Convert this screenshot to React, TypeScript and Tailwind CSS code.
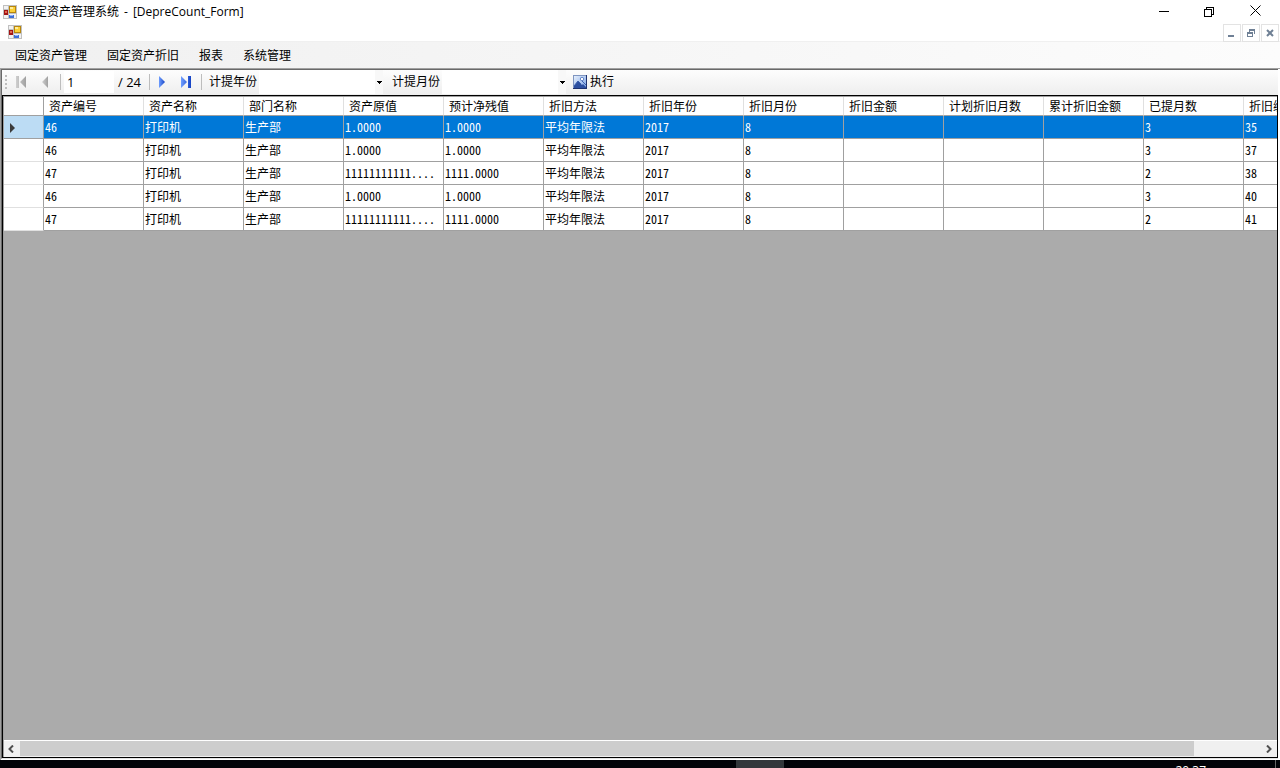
import React from "react";

type Row = string[];

const columns = [
  "资产编号", "资产名称", "部门名称", "资产原值", "预计净残值", "折旧方法", "折旧年份",
  "折旧月份", "折旧金额", "计划折旧月数", "累计折旧金额", "已提月数", "折旧编号",
];

const rows: Row[] = [
  ["46", "打印机", "生产部", "1.0000", "1.0000", "平均年限法", "2017", "8", "", "", "", "3", "35"],
  ["46", "打印机", "生产部", "1.0000", "1.0000", "平均年限法", "2017", "8", "", "", "", "3", "37"],
  ["47", "打印机", "生产部", "11111111111....", "1111.0000", "平均年限法", "2017", "8", "", "", "", "2", "38"],
  ["46", "打印机", "生产部", "1.0000", "1.0000", "平均年限法", "2017", "8", "", "", "", "3", "40"],
  ["47", "打印机", "生产部", "11111111111....", "1111.0000", "平均年限法", "2017", "8", "", "", "", "2", "41"],
];

const menus = ["固定资产管理", "固定资产折旧", "报表", "系统管理"];

function FormIcon() {
  return (
    <svg width="14" height="14" viewBox="0 0 14 14" shapeRendering="crispEdges" aria-hidden="true">
      <path d="M0 0h14v14H0z" fill="#c0c0c0" />
      <path d="M1 1h4v3H1zM1 10h4v3H1zM6 9h7v4H6z" fill="#f2f2f2" />
      <path d="M6 1h7v7H6z" fill="#b8860b" />
      <path d="M7 2h5v5H7z" fill="#fbd038" />
      <path d="M7 2h3v2H7z" fill="#ffec9a" />
      <path d="M1 5h4v5H1z" fill="#a31515" />
      <path d="M2 6h2v2H2z" fill="#e36a50" />
      <path d="M6 10h5v3H6z" fill="#3e6fd8" />
      <path d="M7 10h3v1H7z" fill="#8db4ff" />
    </svg>
  );
}

function NavIcon({ kind }: { kind: "first" | "prev" | "next" | "last" }) {
  const active = kind === "next" || kind === "last";
  const id = `nav-${kind}`;
  return (
    <svg width="12" height="14" viewBox="0 0 12 14" aria-hidden="true">
      <defs>
        <linearGradient id={id}>
          <stop offset="0" stopColor={active ? "#6f9eff" : "#cfcfcf"} />
          <stop offset="1" stopColor={active ? "#1442c4" : "#a0a0a0"} />
        </linearGradient>
      </defs>
      {kind === "first" && <path d="M1 1h3v12H1zM11 1v12L5 7z" fill={`url(#${id})`} />}
      {kind === "prev" && <path d="M9 1v12L3 7z" fill={`url(#${id})`} />}
      {kind === "next" && <path d="M3 1v12l6-6z" fill={`url(#${id})`} />}
      {kind === "last" && <path d="M1 1v12l6-6zM8 1h3v12H8z" fill={`url(#${id})`} />}
    </svg>
  );
}

function NavButton({ kind, label }: { kind: "first" | "prev" | "next" | "last"; label: string }) {
  return (
    <button type="button" aria-label={label} className="flex h-6 w-6 items-center justify-center">
      <NavIcon kind={kind} />
    </button>
  );
}

function Separator() {
  return <span className="ml-[3px] h-4 w-px bg-[#bdbdbd]" />;
}

function DropArrow() {
  return (
    <svg width="5" height="3" viewBox="0 0 5 3" shapeRendering="crispEdges" aria-hidden="true">
      <path d="M0 0h5v1H0zM1 1h3v1H1zM2 2h1v1H2z" fill="#000" />
    </svg>
  );
}

function ComboBox({ label }: { label: string }) {
  return (
    <div className="flex h-6 items-center">
      <label htmlFor={label} className="w-[50px] whitespace-nowrap">{label}</label>
      <div className="relative flex h-6 w-[124px] items-center">
        <select id={label} className="h-6 w-full appearance-none bg-white outline-none">
          <option></option>
        </select>
        <span className="pointer-events-none absolute right-0 flex h-6 w-2 items-center justify-center bg-[#f8f8f8]">
          <DropArrow />
        </span>
      </div>
    </div>
  );
}

function TitleBar() {
  return (
    <header className="flex h-6 shrink-0 items-center justify-between bg-white pl-[3px]">
      <div className="flex items-center gap-[6px]">
        <FormIcon />
        <h1 className="flex gap-[5px]">
          <span>固定资产管理系统</span>
          <span>-</span>
          <span>[DepreCount_Form]</span>
        </h1>
      </div>
      <div className="flex pr-[2px]">
        <button type="button" aria-label="最小化" className="flex h-6 w-[46px] items-center justify-center">
          <svg width="11" height="11" viewBox="0 0 11 11" shapeRendering="crispEdges"><path d="M1 4h10v1H1z" /></svg>
        </button>
        <button type="button" aria-label="还原" className="flex h-6 w-[46px] items-center justify-center">
          <svg width="11" height="11" viewBox="0 0 11 11" fill="none" stroke="#000" shapeRendering="crispEdges">
            <path d="M.5 1.5h7v7h-7zM2.5 1.5v-2h7v7h-2" transform="translate(0 1)" />
          </svg>
        </button>
        <button type="button" aria-label="关闭" className="flex h-6 w-[46px] items-center justify-center pb-1">
          <svg width="11" height="11" viewBox="0 0 11 11" fill="none" stroke="#000"><path d="M.5.5l10 10M10.5.5l-10 10" /></svg>
        </button>
      </div>
    </header>
  );
}

function ChildBar() {
  const box = "flex h-[18px] w-[18px] items-center justify-center border border-[#e3e3e3] bg-white";
  return (
    <div className="flex h-[18px] shrink-0 items-start justify-between border-b border-[#f0f0f0] bg-white pl-2 pr-px">
      <div className="pt-px"><FormIcon /></div>
      <div className="flex gap-px">
        <button type="button" aria-label="最小化子窗口" className={box}>
          <svg width="8" height="8" viewBox="0 0 8 8" shapeRendering="crispEdges"><path d="M0 6h6v2H0z" fill="#6f8095" /></svg>
        </button>
        <button type="button" aria-label="还原子窗口" className={box}>
          <svg width="8" height="8" viewBox="0 0 8 8" shapeRendering="crispEdges" fill="#6f8095">
            <path d="M2 0h6v5H7V2H3v1H2zM0 3h6v5H0zM1 5v2h4V5z" fillRule="evenodd" />
          </svg>
        </button>
        <button type="button" aria-label="关闭子窗口" className={box}>
          <svg width="8" height="8" viewBox="0 0 8 8" fill="none" stroke="#6f8095" strokeWidth="2"><path d="M1 1l6 6M7 1L1 7" /></svg>
        </button>
      </div>
    </div>
  );
}

function ToolBar() {
  return (
    <div className="flex h-[25px] shrink-0 items-start bg-linear-to-b from-[#fdfdfd] to-[#eeeeee] pl-[3px]">
      <div className="flex h-6 items-center">
        <svg width="3" height="14" viewBox="0 0 3 14" shapeRendering="crispEdges" aria-hidden="true">
          <path d="M0 0h2v2H0zM0 4h2v2H0zM0 8h2v2H0zM0 12h2v2H0z" fill="#bdbdbd" />
        </svg>
        <div className="flex items-center pl-px">
          <NavButton kind="first" label="移到第一条记录" />
          <NavButton kind="prev" label="移到上一条记录" />
        </div>
        <Separator />
        <input aria-label="位置" defaultValue="1" className="ml-[3px] h-[22px] w-[50px] bg-white pl-[3px] text-[13px] outline-none" />
        <span className="w-8 pl-1 text-[13px] whitespace-nowrap">/ 24</span>
        <Separator />
        <NavButton kind="next" label="移到下一条记录" />
        <NavButton kind="last" label="移到最后一条记录" />
        <Separator />
        <div className="flex items-center gap-[9px] pl-[7px]">
          <ComboBox label="计提年份" />
          <ComboBox label="计提月份" />
        </div>
        <button type="button" className="ml-[7px] flex h-6 items-center gap-[3px]">
          <svg width="14" height="14" viewBox="0 0 14 14" aria-hidden="true">
            <defs>
              <linearGradient id="picture-sky" x2="1" y2="1">
                <stop offset="0" stopColor="#e4eefc" />
                <stop offset="1" stopColor="#7fa6e6" />
              </linearGradient>
            </defs>
            <path d="M0 0h14v14H0z" fill="#7f95c0" />
            <path d="M13 0h1v14H0v-1h13z" fill="#1d3270" />
            <path d="M1 1h12v12H1z" fill="url(#picture-sky)" />
            <path d="M1 11l4-5 3 3 1 1 1-1 3 3v1H1z" fill="#2c4fa0" />
            <path d="M1 11l4-5 3 3M9 6l4 4" fill="none" stroke="#3b5fae" />
            <circle cx="9" cy="4" r="1.7" fill="#fff" stroke="#4a6fbb" strokeWidth=".8" />
          </svg>
          执行
        </button>
      </div>
    </div>
  );
}

function Grid() {
  return (
    <div className="min-h-0 flex-1 overflow-hidden bg-[#ababab]">
      <table className="w-[1340px] table-fixed border-separate border-spacing-0 font-['Noto_Sans_CJK_SC',sans-serif]">
        <colgroup>
          <col className="w-10" />
          {columns.map((c) => <col key={c} className="w-[100px]" />)}
        </colgroup>
        <thead>
          <tr className="h-[19px] bg-white">
            <th aria-label="行" className="border-r border-b border-[#a0a0a0] p-0" />
            {columns.map((c) => (
              <th key={c} className="border-r border-b border-r-[#e0e0e0] border-b-[#a0a0a0] p-0 pl-[5px] text-left leading-[18px] font-normal whitespace-nowrap">{c}</th>
            ))}
          </tr>
        </thead>
        <tbody>
          {rows.map((row, r) => (
            <tr key={r} className={r === 0 ? "h-[23px] bg-[#0078d7] text-white" : "h-[23px] bg-white"}>
              <th
                aria-label={`第 ${r + 1} 行`}
                className={r === 0 ? "border-r border-b border-[#a0a0a0] bg-[#bcdcf4] p-0 pl-[5px]" : "border-r border-b border-r-[#a0a0a0] border-b-[#e0e0e0] p-0"}
              >
                {r === 0 && (
                  <svg width="7" height="10" viewBox="0 0 7 10" className="mt-[2px] block" aria-hidden="true"><path d="M1 0l5 5-5 5z" fill="#3b3b3b" /></svg>
                )}
              </th>
              {row.map((value, c) => (
                <td key={c} className="border-r border-b border-[#a0a0a0] p-0 pl-px leading-[22px] whitespace-nowrap [font-feature-settings:'hwid']">{value}</td>
              ))}
            </tr>
          ))}
        </tbody>
      </table>
    </div>
  );
}

function ScrollBar() {
  return (
    <div className="flex h-[17px] shrink-0 items-stretch border-y border-t-white border-b-[#f0f0f0] bg-[#f0f0f0]">
      <button type="button" aria-label="向左滚动" className="flex w-4 items-center justify-center pr-[2px]">
        <svg width="6" height="8" viewBox="0 0 6 8" fill="none" stroke="#505050" strokeWidth="2"><path d="M5 .5L1.5 4 5 7.5" /></svg>
      </button>
      <div className="flex-1">
        <div className="h-full w-[94.7%] bg-[#cdcdcd]" />
      </div>
      <button type="button" aria-label="向右滚动" className="flex w-[17px] items-center justify-center">
        <svg width="6" height="8" viewBox="0 0 6 8" fill="none" stroke="#505050" strokeWidth="2"><path d="M1 .5L4.5 4 1 7.5" /></svg>
      </button>
    </div>
  );
}

export default function App() {
  return (
    <div className="flex h-screen flex-col overflow-hidden bg-white font-['Open_Sans','Noto_Sans_CJK_SC',sans-serif] text-[12px] leading-4 text-black">
      <TitleBar />
      <ChildBar />
      <nav className="flex h-[26px] shrink-0 items-center gap-5 bg-linear-to-r from-[#f0f0f0] to-[#fcfcfc] pt-[2px] pl-[15px]">
        {menus.map((m) => <button key={m} type="button">{m}</button>)}
      </nav>
      <main className="flex min-h-0 flex-1 flex-col border-t border-l border-[#a0a0a0] pr-[2px] pb-px">
        <div className="flex min-h-0 flex-1 flex-col border-t border-l border-[#696969] border-b border-b-[#e3e3e3]">
          <ToolBar />
          <div className="flex min-h-0 flex-1 flex-col border border-black">
            <div className="flex min-h-0 flex-1 flex-col border-t border-l border-[#a0a0a0]">
              <Grid />
              <ScrollBar />
            </div>
          </div>
        </div>
      </main>
      <footer className="flex h-2 shrink-0 justify-between overflow-hidden bg-[#020308] text-white">
        <div className="ml-[736px] w-12 bg-[#33373b]" />
        <div className="flex">
          <time className="pt-[3px] pr-[69px] leading-4">20:37</time>
          <span className="mr-1 w-px bg-[#666]" />
        </div>
      </footer>
    </div>
  );
}
